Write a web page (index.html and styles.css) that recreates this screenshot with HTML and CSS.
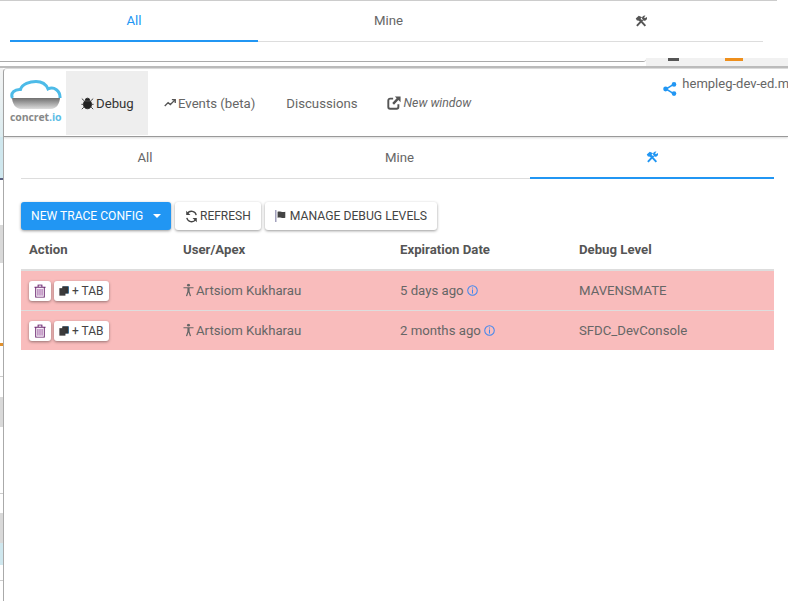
FILE: index.html
```html
<!DOCTYPE html>
<html lang="en">
<head>
    <meta charset="UTF-8">
    <title>Debug</title>
    <link rel="stylesheet" href="styles.css">
</head>
<body>
<div class="behind-rule"></div>
<section class="behind">
    <div class="behind-panel">
        <div class="tabs tabs-behind">
            <div class="tab active">All</div>
            <div class="tab">Mine</div>
            <div class="tab"><svg class="ico tools" viewBox="0 0 16 16"><use href="#i-tools"/></svg></div>
        </div>
    </div>
    <div class="behind-strip">
        <i class="bit bit-dark"></i>
        <i class="bit bit-orange"></i>
    </div>
</section>
<div class="stage">
    <div class="edge">
        <i class="fade"></i><i class="sky"></i><i class="dark"></i><i></i><i class="grey"></i><i></i><i class="orange"></i><i></i><i class="line"></i><i></i>
        <i class="grey"></i><i></i><i class="line"></i><i></i><i class="grey"></i><i class="sky"></i><i></i><i class="line"></i>
    </div>
    <main class="window">
        <header class="topbar">
            <div class="logo">
                <svg class="logo-cloud" viewBox="0 0 52 30">
                    <defs>
                        <linearGradient id="cloud-base" x1="0" y1="0" x2="0" y2="1">
                            <stop offset="0" stop-color="#666"/>
                            <stop offset="1" stop-color="#ddd"/>
                        </linearGradient>
                    </defs>
                    <path d="M2 17h48c0 7-4 12-9 12H11c-5 0-9-5-9-12z" fill="url(#cloud-base)"/>
                    <path d="M2.500 18C0 13 5 9 10.500 9.500 12 4 20 1.500 26 1.500c6 0 10 2.500 12 7.500 6-3 12.500 2 12 9" fill="#fff" stroke="#4dbbe8" stroke-width="3"/>
                </svg>
                <div class="logo-text">concret<span class="logo-io">.io</span></div>
            </div>
            <a class="nav-item current"><svg class="ico bug" viewBox="0 0 16 16"><path d="M5.200 4.200a2.800 2.800 0 0 1 5.600 0zM4.200 5.200h7.600c.8 1 1.200 2.400 1.200 4 0 3-2 5.300-5 5.300s-5-2.300-5-5.300c0-1.600.4-3 1.200-4zM1 2l3.300 3M15 2l-3.300 3M.5 9H3M13 9h2.500M1 15l2.500-2.500M15 15l-2.500-2.500" fill="#222" stroke="#222" stroke-width="1"/></svg>Debug</a>
            <a class="nav-item"><svg class="ico trend" viewBox="0 0 16 16"><path d="M1 12l4.500-4.500 3 2.500L14 4.500M10.500 3.500H15V8" fill="none" stroke="#555" stroke-width="1.800"/></svg>Events (beta)</a>
            <a class="nav-item">Discussions</a>
            <a class="nav-item new-window"><svg class="ico external" viewBox="0 0 16 16"><path d="M7 3H3.500A2 2 0 0 0 1.500 5v7.500a2 2 0 0 0 2 2H11a2 2 0 0 0 2-2V9.500" fill="none" stroke="#555" stroke-width="2.200"/><path d="M9 .5h6.500V7L13 4.700 8 10 6 8l5-5.300z" fill="#555"/></svg><em>New window</em></a>
            <div class="org">
                <svg class="ico share" viewBox="0 0 14 14"><path d="M11 2.200L3 7l8 4.800" fill="none" stroke="#2196f3" stroke-width="1.500"/><circle cx="11" cy="2.400" r="2.300" fill="#2196f3"/><circle cx="2.600" cy="7" r="2.400" fill="#2196f3"/><circle cx="11" cy="11.600" r="2.300" fill="#2196f3"/></svg>
                <span>hempleg-dev-ed.m</span>
            </div>
        </header>
        <div class="content">
            <div class="tabs">
                <div class="tab">All</div>
                <div class="tab">Mine</div>
                <div class="tab active"><svg class="ico tools" viewBox="0 0 16 16"><use href="#i-tools"/></svg></div>
            </div>
            <div class="toolbar">
                <button class="btn btn-primary">New Trace Config<i class="caret"></i></button>
                <button class="btn"><svg class="ico refresh" viewBox="0 0 16 16"><path d="M13.800 6.200A6 6 0 0 0 3 4.200M2.200 9.800A6 6 0 0 0 13 11.800" fill="none" stroke="#444" stroke-width="1.600"/><path d="M1.500 1v5.200h5.200zM14.500 15V9.800H9.300z" fill="#444"/></svg>Refresh</button>
                <button class="btn btn-levels"><svg class="ico flag" viewBox="0 0 14 14"><path d="M1 0v14" stroke="#5b5a8a" stroke-width="1"/><path d="M3 2c3-1.300 5 1.200 9 0v7c-4 1.200-6-1.300-9 0z" fill="#444"/></svg>Manage Debug Levels</button>
            </div>
            <table class="traces">
                <colgroup>
                    <col class="col-action"><col class="col-user"><col class="col-date"><col class="col-level">
                </colgroup>
                <thead>
                <tr><th>Action</th><th>User/Apex</th><th>Expiration Date</th><th>Debug Level</th></tr>
                </thead>
                <tbody>
                <tr>
                    <td>
                        <div class="row-actions">
                            <button class="btn btn-small btn-trash"><svg class="ico trash" viewBox="0 0 14 16"><use href="#i-trash"/></svg></button>
                            <button class="btn btn-small"><svg class="ico copy" viewBox="0 0 14 14"><use href="#i-copy"/></svg>+ Tab</button>
                        </div>
                    </td>
                    <td><svg class="ico person" viewBox="0 0 12 14"><use href="#i-person"/></svg>Artsiom Kukharau</td>
                    <td>5 days ago <svg class="ico info" viewBox="0 0 12 12"><use href="#i-info"/></svg></td>
                    <td>MAVENSMATE</td>
                </tr>
                <tr>
                    <td>
                        <div class="row-actions">
                            <button class="btn btn-small btn-trash"><svg class="ico trash" viewBox="0 0 14 16"><use href="#i-trash"/></svg></button>
                            <button class="btn btn-small"><svg class="ico copy" viewBox="0 0 14 14"><use href="#i-copy"/></svg>+ Tab</button>
                        </div>
                    </td>
                    <td><svg class="ico person" viewBox="0 0 12 14"><use href="#i-person"/></svg>Artsiom Kukharau</td>
                    <td>2 months ago <svg class="ico info" viewBox="0 0 12 12"><use href="#i-info"/></svg></td>
                    <td>SFDC_DevConsole</td>
                </tr>
                </tbody>
            </table>
        </div>
    </main>
</div>
<svg class="sprites" aria-hidden="true">
    <symbol id="i-tools" viewBox="0 0 16 16">
        <path d="M2.500 14.500L10 6.500M13.800 14.500L6.500 6.500" fill="none" stroke="currentColor" stroke-width="2.600"/>
        <path d="M1 4.500L5 1l4.500 2-2 1.500.5 2L5.800 8.500 4 7 2.800 7.500z" fill="currentColor"/>
        <path d="M9.500 5a3.400 3.400 0 0 1 4.500-4l-1.900 2 1.200 1.300L15.500 2.500A3.400 3.400 0 0 1 11.500 7.500z" fill="currentColor"/>
    </symbol>
    <symbol id="i-trash" viewBox="0 0 14 16">
        <path d="M.5 3.500h13M4.800 3V1h4.400v2M2 4v11.300h10V4" fill="none" stroke="#6d2a72" stroke-width="1.200"/>
        <path d="M4.600 5.500v8M7 5.500v8M9.400 5.500v8" fill="none" stroke="#8d3f93" stroke-width="1.100"/>
    </symbol>
    <symbol id="i-copy" viewBox="0 0 14 14">
        <path d="M5.500.5H14v10H5.500z" fill="#3a86bd"/>
        <path d="M4.500.5H13v10H4.500z" fill="#333"/>
        <path d="M.5 3H9v10.500H.5z" fill="#3b3b3b"/>
    </symbol>
    <symbol id="i-person" viewBox="0 0 12 14">
        <circle cx="6" cy="1.700" r="1.600" fill="currentColor"/>
        <path d="M.5 3.900h11v1.300H7.200V8.500L8.900 13.800H7.500L6 9.500 4.500 13.800H3.100L4.800 8.500V5.200H.5z" fill="currentColor"/>
    </symbol>
    <symbol id="i-info" viewBox="0 0 12 12">
        <circle cx="6" cy="6" r="5.200" fill="none" stroke="#3f86ee" stroke-width="1.100"/>
        <path d="M6 2.600v1.200M6 5v4.400" stroke="#3f86ee" stroke-width="1.100"/>
    </symbol>
</svg>
</body>
</html>
```
FILE: styles.css
```css
*{
    box-sizing:border-box;
}
html,body{
    height:100%;
}
body{
    margin:0;
    overflow:hidden;
    background:#fff;
    color:#555;
    font-family:Roboto,"Liberation Sans",sans-serif;
    font-size:13.200px;
}
.ico{
    display:inline-block;
    flex:none;
}
.sprites{
    display:none;
}

/* window behind */
.behind-rule{
    width:777px;
    height:1px;
    background:#ccc;
}
.behind{
    display:flex;
    height:65px;
}
.behind-panel{
    width:646px;
    height:61px;
    border-bottom:1px solid #aaa;
    border-bottom-right-radius:3px;
    padding-left:10px;
}
.behind-strip{
    flex:1;
    display:flex;
    height:8px;
    margin-top:57px;
    background:#f1f1f1;
    padding-left:22px;
    gap:46px;
}
.bit{
    display:block;
    height:3px;
}
.bit-dark{
    width:11px;
    background:#555;
}
.bit-orange{
    width:18px;
    background:#ee8f1c;
}

/* tabs */
.tabs{
    display:grid;
    grid-template-columns:248fr 261fr 244fr;
    height:42px;
    border-bottom:1px solid #ddd;
}
.tabs-behind{
    width:753px;
    height:41px;
}
.tabs-behind .tab{
    height:41px;
}
.tab{
    display:flex;
    align-items:center;
    justify-content:center;
    height:42px;
    border-bottom:2px solid transparent;
    color:#666;
}
.tab.active{
    border-bottom-color:#2196f3;
    color:#2196f3;
}
.tools{
    width:12px;
    height:12px;
    color:#555;
}
.tab.active .tools{
    color:#2196f3;
}

/* left edge of the page behind */
.stage{
    display:flex;
    border-top:2px solid #bbb;
}
.edge{
    width:3px;
    flex:none;
    display:grid;
    grid-template-rows:69px 41px 2px 45px 38px 80px 3px 30px 1px 20px 30px 66px 1px 19px 30px 22px 15px 1px;
}
.edge .fade{background:linear-gradient(#f4f4f4,#dcecf0);}
.edge .sky{background:#cfe7ee;}
.edge .dark{background:#5a6080;}
.edge .grey{background:#d9d9d9;}
.edge .orange{background:#e0902c;}
.edge .line{background:#ccc;}

/* main window */
.window{
    width:785px;
    flex:none;
    min-height:533px;
    border-left:1px solid #aaa;
    border-top:1px solid #ddd;
    border-top-left-radius:4px;
    background:#fff;
}
.topbar{
    display:flex;
    height:68px;
    padding-top:2px;
    border-bottom:1px solid #999;
    box-shadow:0 1px 2px rgba(0,0,0,.15);
}
.logo{
    width:62px;
    flex:none;
    padding:9px 0 0 6px;
}
.logo-cloud{
    display:block;
    width:52px;
    height:30px;
}
.logo-text{
    width:52px;
    color:#888;
    font-family:"Open Sans",sans-serif;
    font-size:10.500px;
    font-weight:700;
    letter-spacing:-.1px;
    line-height:14px;
    white-space:nowrap;
}
.logo-io{
    color:#5cbde6;
}
.nav-item{
    display:flex;
    align-items:center;
    flex:none;
    padding:0 15px 0 16px;
    height:64px;
    gap:2px;
    color:#666;
}
.nav-item.current{
    width:82px;
    padding:0 0 0 15px;
    background:#eee;
    color:#333;
}
.bug{
    width:13px;
    height:13px;
}
.trend{
    width:12px;
    height:12px;
}
.external{
    width:14px;
    height:14px;
}
.new-window{
    padding-left:14px;
    gap:3px;
}
.new-window em{
    font-size:12.300px;
    color:#666;
}
.org{
    display:flex;
    flex:none;
    margin-left:177px;
    gap:5px;
    padding-top:5px;
    align-items:flex-start;
    white-space:nowrap;
    color:#666;
    font-size:13px;
}
.share{
    width:14px;
    height:14px;
    margin-top:6px;
}

.content{
    padding:0 14px 0 17px;
}

/* toolbar */
.toolbar{
    display:flex;
    gap:4px;
    margin-top:23px;
}
.btn{
    display:inline-flex;
    align-items:center;
    height:28px;
    padding:0 10px;
    gap:2px;
    border:0;
    border-radius:3px;
    background:#fff;
    box-shadow:0 1px 3px rgba(0,0,0,.4);
    color:#444;
    font-family:inherit;
    font-size:12px;
    text-transform:uppercase;
    white-space:nowrap;
}
.btn-primary{
    width:150px;
    background:#2196f3;
    color:#fff;
    font-size:12.100px;
}
.btn-levels{
    gap:3px;
    font-size:12.200px;
}
.caret{
    width:0;
    height:0;
    margin-left:8px;
    border-left:4px solid transparent;
    border-right:4px solid transparent;
    border-top:4px solid #fff;
}
.refresh{
    width:13px;
    height:13px;
}
.flag{
    width:12px;
    height:12px;
}

/* table */
.traces{
    width:753px;
    border-collapse:separate;
    border-spacing:0;
    table-layout:fixed;
    font-size:13.200px;
}
.col-action{width:154px;}
.col-user{width:217px;}
.col-date{width:179px;}
.col-level{width:203px;}
.traces th{
    height:41px;
    padding:0 8px;
    border-bottom:2px solid #ddd;
    color:#555;
    font-size:13.200px;
    font-weight:700;
    text-align:left;
}
.traces td{
    height:40px;
    padding:0 8px;
    border-bottom:1px solid #ddd;
    background:#f9bcbc;
    color:#666;
}
.traces tr:last-child td{
    height:39px;
    border-bottom:0;
}
.row-actions{
    display:flex;
    gap:3px;
}
.btn-small{
    height:20px;
    padding:0 5px;
    gap:3px;
}
.btn-trash{
    width:22px;
    justify-content:center;
}
.trash{
    width:12px;
    height:14px;
}
.copy{
    width:10px;
    height:10px;
}
.person{
    width:11px;
    height:14px;
    margin-right:2px;
    vertical-align:-2px;
    color:#666;
}
.info{
    width:11px;
    height:11px;
    vertical-align:-1px;
}
```
